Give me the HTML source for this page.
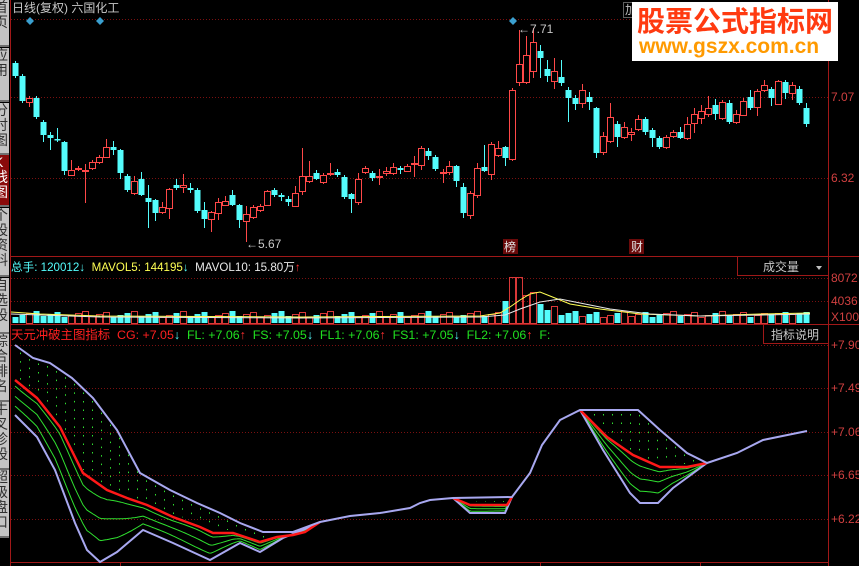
<!DOCTYPE html>
<html><head><meta charset="utf-8">
<style>
html,body{margin:0;padding:0;background:#000;width:859px;height:566px;overflow:hidden;font-family:"Liberation Sans","Noto Sans CJK SC",sans-serif;}
#wrap{position:relative;width:859px;height:566px;}
.t{position:absolute;font-size:12px;white-space:nowrap;line-height:14px;}
.side{position:absolute;left:0;width:9px;background:#c4c4c4;border-bottom:2px solid #707070;overflow:hidden;font-size:14px;color:#303030;line-height:15px;}
.side span{display:block;margin-left:-6px;width:16px;}
</style></head><body><div id="wrap">
<svg id="s" width="859" height="566" style="position:absolute;left:0;top:0">
<g stroke="#7a1010" stroke-dasharray="1 2" stroke-width="1">
<line x1="11" y1="19.5" x2="828" y2="19.5"/><line x1="11" y1="97.5" x2="828" y2="97.5"/><line x1="11" y1="178.5" x2="828" y2="178.5"/>
<line x1="11" y1="278.5" x2="828" y2="278.5"/><line x1="11" y1="301.5" x2="828" y2="301.5"/>
<line x1="11" y1="345.5" x2="828" y2="345.5"/><line x1="11" y1="388.5" x2="828" y2="388.5"/><line x1="11" y1="432.5" x2="828" y2="432.5"/><line x1="11" y1="475.5" x2="828" y2="475.5"/><line x1="11" y1="519.5" x2="828" y2="519.5"/>
</g>
<g stroke="#a01818" stroke-width="1">
<line x1="10.5" y1="0" x2="10.5" y2="566"/>
<line x1="828.5" y1="0" x2="828.5" y2="566"/>
<line x1="11" y1="256.5" x2="859" y2="256.5"/>
<line x1="11" y1="324.5" x2="859" y2="324.5"/>
<line x1="11" y1="562.5" x2="828" y2="562.5"/>
<line x1="120.5" y1="562" x2="120.5" y2="566"/><line x1="540.5" y1="562" x2="540.5" y2="566"/><line x1="700.5" y1="562" x2="700.5" y2="566"/>
</g>
<rect x="737.5" y="256.5" width="91" height="19" fill="#000" stroke="#a01818"/>
<rect x="763.5" y="324.5" width="65" height="19" fill="#000" stroke="#a01818"/>
<polygon points="816,266 822,266 819,270" fill="#c0c0c0"/>
<g id="candles"></g><g id="vol"></g><g id="ind"></g>
<g fill="#3aa0d0"><polygon points="30,17 34,21 30,25 26,21"/><polygon points="100,17 104,21 100,25 96,21"/><polygon points="513,17 517,21 513,25 509,21"/></g>
<rect x="503" y="239" width="15" height="15" fill="#6a0a0a"/><rect x="629" y="239" width="15" height="15" fill="#6a0a0a"/>
</svg>
<div class="t" style="left:12px;top:1px;color:#c8c8c8">日线(复权) 六国化工</div>
<div class="t" style="left:518px;top:22px;color:#c8c8c8">←7.71</div>
<div class="t" style="left:246px;top:237px;color:#c8c8c8">←5.67</div>
<div class="t" style="left:504px;top:240px;color:#e0e0e0">榜</div>
<div class="t" style="left:631px;top:240px;color:#e0e0e0">财</div>
<div class="t" style="left:623px;top:2px;color:#c0c0c0;border:1px solid #606060;padding:0 1px">加</div>
<div style="position:absolute;left:632px;top:2px;width:206px;height:59px;background:#fff"></div>
<div class="t" style="left:637px;top:4px;font-size:28px;line-height:32px;color:#ff3a10;font-weight:bold;font-family:'Noto Sans CJK SC',sans-serif;">股票公式指标网</div>
<div class="t" style="left:639px;top:35px;font-size:21px;line-height:24px;color:#ff9a00;font-weight:bold">www.gszx.com.cn</div>
<div class="t" style="left:831px;top:90px;color:#d04040">7.07</div>
<div class="t" style="left:831px;top:171px;color:#d04040">6.32</div>
<div class="t" style="left:831px;top:271px;color:#d04040">8072</div>
<div class="t" style="left:831px;top:294px;color:#d04040">4036</div>
<div class="t" style="left:831px;top:310px;color:#d04040">X100</div>
<div class="t" style="left:831px;top:338px;color:#d04040">+7.90</div>
<div class="t" style="left:831px;top:381px;color:#d04040">+7.49</div>
<div class="t" style="left:831px;top:425px;color:#d04040">+7.06</div>
<div class="t" style="left:831px;top:468px;color:#d04040">+6.65</div>
<div class="t" style="left:831px;top:512px;color:#d04040">+6.22</div>
<div class="t" style="left:763px;top:260px;color:#c8c8c8">成交量</div>
<div class="t" style="left:771px;top:328px;color:#c8c8c8">指标说明</div>
<div class="t" style="left:11px;top:261px;font-size:11.6px"><span style="color:#54fcfc">总手: 120012</span><span style="color:#54fcfc">↓</span> &nbsp;<span style="color:#ffff54">MAVOL5: 144195</span><span style="color:#54fcfc">↓</span> &nbsp;<span style="color:#e8e8e8">MAVOL10: 15.80万</span><span style="color:#ff3030">↑</span></div>
<div class="t" style="left:11px;top:328px;font-size:12.4px"><span style="color:#ff2020">天元冲破主图指标 &nbsp;CG: +7.05</span><span style="color:#54fcfc">↓</span> &nbsp;<span style="color:#20e020">FL: +7.06</span><span style="color:#ff3030">↑</span> &nbsp;<span style="color:#20e020">FS: +7.05</span><span style="color:#54fcfc">↓</span> &nbsp;<span style="color:#20e020">FL1: +7.06</span><span style="color:#ff3030">↑</span> &nbsp;<span style="color:#20e020">FS1: +7.05</span><span style="color:#54fcfc">↓</span> &nbsp;<span style="color:#20e020">FL2: +7.06</span><span style="color:#ff3030">↑</span> &nbsp;<span style="color:#20e020">F:</span></div>
<div class="side" style="top:0;height:45px"><span>首<br>页</span></div>
<div class="side" style="top:48px;height:52px"><span>应<br>用</span></div>
<div class="side" style="top:103px;height:50px"><span>分<br>时<br>图</span></div>
<div class="side" style="top:155px;height:50px;background:#8a0a0a;color:#fff"><span>K<br>线<br>图</span></div>
<div class="side" style="top:208px;height:67px"><span>个<br>股<br>资<br>料</span></div>
<div class="side" style="top:278px;height:54px"><span>自<br>选<br>股</span></div>
<div class="side" style="top:334px;height:66px"><span>综<br>合<br>排<br>名</span></div>
<div class="side" style="top:402px;height:66px"><span>牛<br>叉<br>诊<br>股</span></div>
<div class="side" style="top:470px;height:66px"><span>超<br>级<br>盘<br>口</span></div>
<script>
var C=[[15,63,76,'c'],[22,76,101,'c'],[29,98,102,'r',96,107],[36,98,117,'c'],[43,122,135,'c',120,142],[50,135,138,'c',132,150],[57,139,140,'c',128,142],[64,142,171,'c',141,175],[71,170,175,'r',160,176],[78,168,169,'r'],[85,170,171,'r',164,203],[92,162,168,'r'],[99,157,162,'r'],[106,147,157,'r',139,158],[113,147,150,'c',141,155],[120,150,173,'c',149,179],[127,176,190,'c'],[134,181,193,'r',176,195],[141,179,195,'c',172,196],[148,198,202,'c',185,228],[155,200,213,'c',199,221],[162,207,212,'r',202,214],[169,189,208,'r',188,219],[176,185,188,'c',179,190],[183,185,187,'r',174,193],[190,188,190,'c',183,193],[197,190,211,'c'],[204,210,219,'c',202,228],[211,212,219,'r',211,232],[218,202,213,'r',198,220],[225,201,205,'r',196,206],[232,195,205,'c',190,206],[239,205,220,'c',204,228],[246,214,221,'r',206,242],[253,207,217,'r'],[260,206,210,'r'],[267,191,205,'r',190,206],[274,190,195,'c',188,197],[281,195,197,'c',193,201],[288,199,202,'c',196,206],[295,193,206,'r',186,207],[302,176,191,'r',148,195],[309,176,181,'r',161,183],[316,173,179,'c',170,180],[323,175,182,'r'],[330,173,174,'r',163,176],[337,172,175,'c',169,177],[344,177,197,'c'],[351,194,199,'c',193,213],[358,179,202,'r',173,205],[365,168,172,'r',166,174],[372,173,178,'c',171,181],[379,176,177,'r',169,185],[386,171,173,'r',167,176],[393,167,173,'r',163,175],[400,168,170,'c',166,174],[407,166,171,'r',164,172],[414,163,164,'r',156,177],[421,148,165,'r',146,170],[428,151,156,'c',148,160],[435,157,169,'c',155,171],
[443,172,173,'r',169,183],[449,166,172,'r',161,175],[456,166,181,'c',165,187],[463,187,213,'c',183,218],[470,193,215,'r',191,219],[477,168,195,'r',163,198],[484,167,171,'c',145,172],[491,144,174,'r',142,180],[498,148,155,'r',141,157],[505,147,158,'c',146,166],[512,90,159,'r',88,161],[519,64,82,'r',30,86],[526,55,82,'r',36,84],[533,42,71,'r',28,78],[540,51,58,'c',45,78],[547,69,76,'c',60,82],[554,71,81,'r',58,89],[561,77,83,'c',60,86],[568,90,98,'c',87,122],[575,98,104,'c',95,110],[582,90,103,'r',84,108],[589,97,102,'c',92,110],[596,108,153,'c',107,158],[603,136,152,'r',132,155],[610,117,141,'r',103,143],[617,124,137,'c',121,147],[624,127,137,'r',122,139],[631,132,134,'r',128,141],[638,119,129,'r',115,131],[645,119,132,'c',117,135],[652,130,138,'c',128,147],[659,138,147,'c',136,149],[666,137,147,'r',135,149],[673,132,136,'r',130,138],[680,132,138,'c',127,139],[687,124,138,'r',117,140],[694,114,123,'r',108,133],[701,111,118,'r',105,124],[708,108,114,'r',96,117],[715,105,114,'c',99,120],[722,102,118,'r',100,120],[729,103,122,'c',100,124],[736,114,122,'r',110,124],[743,101,115,'r',98,116],[750,97,108,'c',90,110],[757,91,107,'r',89,116],[764,85,90,'r',80,92],[771,89,98,'c',87,106],[778,81,104,'r',80,105],[785,82,93,'c',80,99],[792,85,93,'r',82,100],[799,89,103,'c',86,105],[806,108,124,'c',103,127]];
var NS="http://www.w3.org/2000/svg";
function el(t,a,p){var e=document.createElementNS(NS,t);for(var k in a)e.setAttribute(k,a[k]);p.appendChild(e);return e;}
var g=document.getElementById('candles'),v=document.getElementById('vol'),ind=document.getElementById('ind');
C.forEach(function(c,i){var x=c[0],t=c[1],b=c[2],col=c[3]=='r'?'#ff4848':'#54fcfc';var h=c[4]||t-2,l=c[5]||b+2;
el('line',{x1:x+.5,y1:h,x2:x+.5,y2:l,stroke:col},g);
if(c[3]=='r'){el('rect',{x:x-2.5,y:t+.5,width:6,height:Math.max(b-t,1),fill:'#000',stroke:col},g);}
else el('rect',{x:x-2.5,y:t,width:6,height:Math.max(b-t,1.5),fill:col},g);
var vh=6+((i*37)%7);if(x>=505&&x<=560){vh={505:22,512:46,519:46,526:28,533:31,540:19,547:13,554:17,561:10}[x]||12;}
if(x>770)vh=9+(i%3);
if(c[3]=='r')el('rect',{x:x-2.5,y:323.5-vh,width:6,height:vh,fill:'none',stroke:'#d83838'},v);
else el('rect',{x:x-2.5,y:323-vh,width:6,height:vh,fill:'#54fcfc'},v);});
el('polyline',{points:'11,312 40,314 100,316 300,317 480,316 500,313 510,307 520,300 530,294 540,292 550,296 570,304 600,309 640,314 700,316 760,314 810,313',fill:'none',stroke:'#ffff54'},v);
el('polyline',{points:'11,314 40,315 100,317 300,318 480,317 505,315 520,309 540,302 560,299 580,303 610,309 650,314 700,316 760,315 810,314',fill:'none',stroke:'#e8e8e8'},v);
function I(p,x){for(var i=0;i<p.length-1;i++){if(x>=p[i][0]&&x<=p[i+1][0]){var f=(x-p[i][0])/(p[i+1][0]-p[i][0]||1);return p[i][1]+f*(p[i+1][1]-p[i][1]);}}return x<p[0][0]?p[0][1]:p[p.length-1][1];}
var U=[[15,345],[33,358],[50,363],[72,378],[93,398],[117,430],[140,473],[170,490],[197,503],[220,513],[240,523],[263,532],[293,532],[320,522],[350,516],[380,513],[410,508],[420,503],[430,500],[453,498],[512,497],[530,473],[542,445],[560,420],[580,410],[638,410],[660,430],[687,453],[707,463],[737,453],[763,440],[807,431]];
var P=[{L:[[15,415],[37,437],[55,470],[75,523],[87,550],[100,562],[117,552],[143,530],[173,543],[210,560],[240,543],[260,552],[283,538],[303,530],[320,522]],R:[[15,380],[37,398],[60,427],[83,473],[107,490],[127,498],[147,505],[173,517],[200,527],[213,533],[233,533],[260,542],[277,537],[293,535],[305,532],[320,522]]},
{L:[[453,498],[470,513],[505,513],[512,497]],R:[[453,498],[470,505],[507,505],[512,497]]},
{L:[[580,410],[603,450],[630,493],[640,503],[658,503],[673,488],[707,463]],R:[[580,410],[607,437],[633,455],[660,467],[687,467],[707,463]]}];
function pts(f,a,b){var s=[];for(var x=a;x<=b;x+=2)s.push(x+','+f(x).toFixed(1));return s.join(' ');}
P.forEach(function(p){var a=p.L[0][0],b=p.L[p.L.length-1][0];
for(var x=a+5;x<b-3;x+=9){var u=I(U,x)+4,r=I(p.R,x)-3;if(r>u)el('line',{x1:x+.5,y1:u,x2:x+.5,y2:r,stroke:'#30e030','stroke-dasharray':'1.5 7'},ind);}
[0.15,0.45,0.75].forEach(function(k,j){el('polyline',{points:pts(function(x){var r=I(p.R,x),l=I(p.L,x);return r+(l-r)*k+Math.sin(x/11+j)*1.5*(l-r)/60;},a,b),fill:'none',stroke:'#30e030','stroke-width':1},ind);});
el('polyline',{points:p.L.map(function(q){return q.join(',')}).join(' '),fill:'none',stroke:'#a8a8f0','stroke-width':2},ind);
el('polyline',{points:p.R.map(function(q){return q.join(',')}).join(' '),fill:'none',stroke:'#ff1818','stroke-width':2.5},ind);});
el('polyline',{points:U.map(function(q){return q.join(',')}).join(' '),fill:'none',stroke:'#a8a8f0','stroke-width':2},ind);
</script>
</div></body></html>
